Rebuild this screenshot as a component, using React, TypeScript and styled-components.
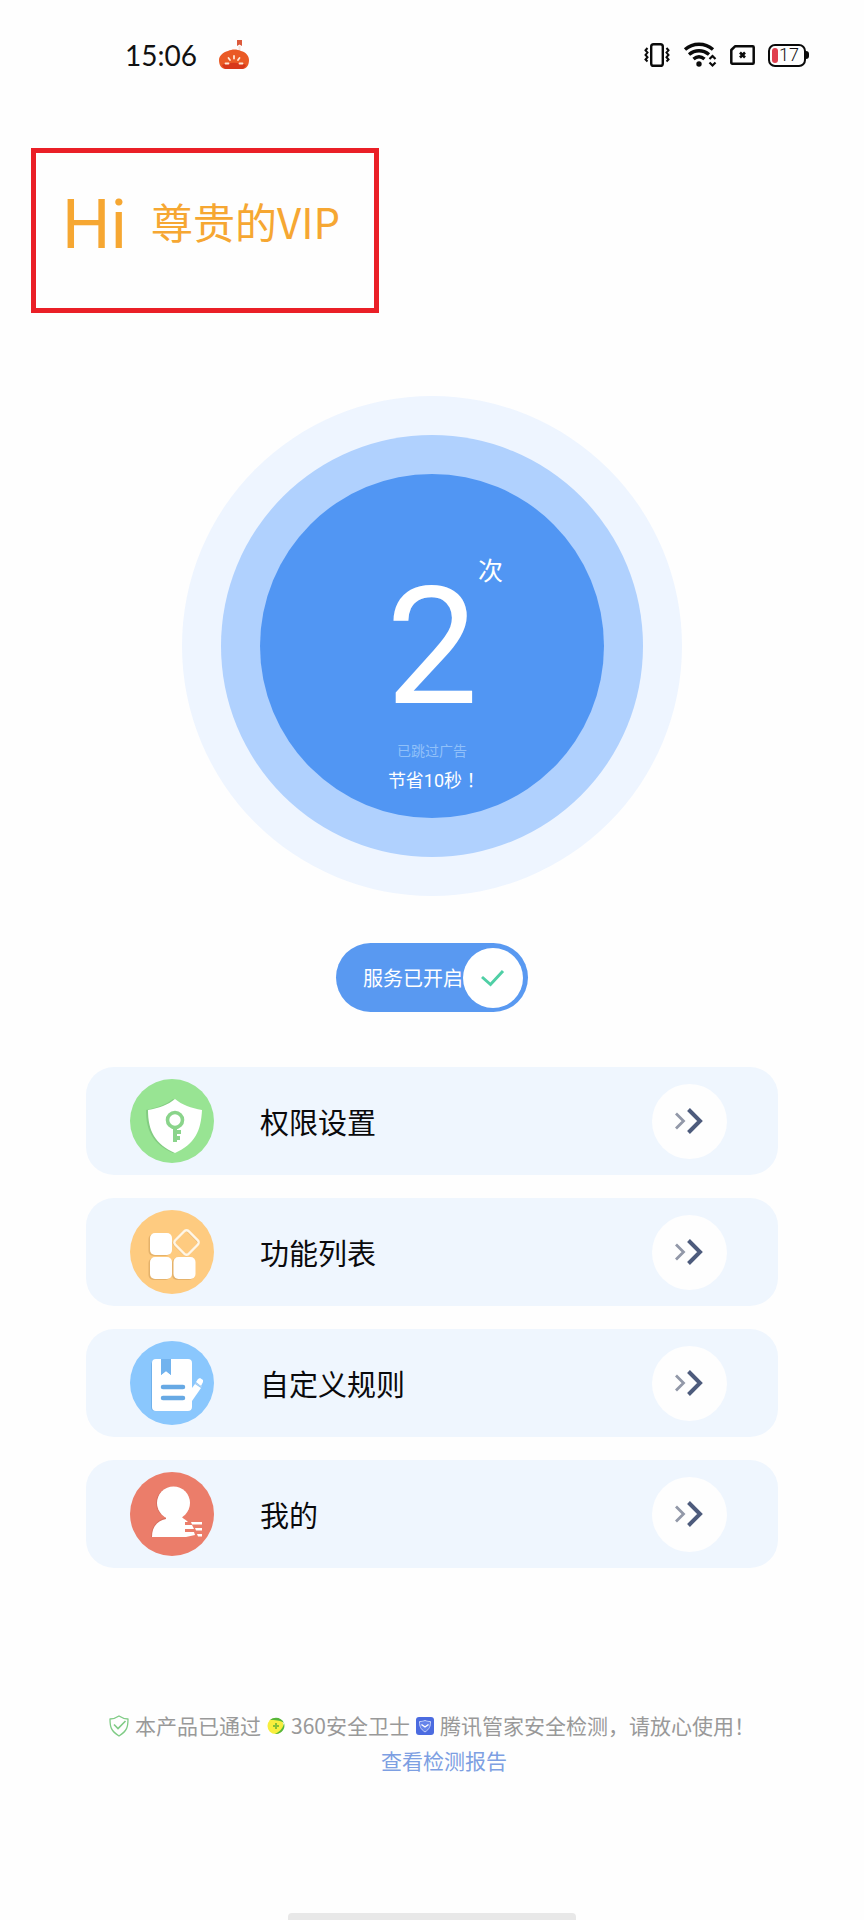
import React, { useState } from "react";
import styled, { createGlobalStyle } from "styled-components";

const GlobalStyle = createGlobalStyle`
  *, *::before, *::after { box-sizing: border-box; }
  body {
    margin: 0;
    background: #fefefe;
    color: #0a0a0c;
    font-family: "Noto Sans CJK SC", "Noto Sans", sans-serif;
  }
  button { font: inherit; color: inherit; }
`;

const Page = styled.div`
  min-height: 100vh;
  display: flex;
  flex-direction: column;
`;

/* ---------- status bar ---------- */

const StatusBar = styled.header`
  height: 110px;
  padding: 0 55px 0 125px;
  display: flex;
  align-items: center;
  justify-content: space-between;
`;

const StatusGroup = styled.div<{ $gap: number }>`
  display: flex;
  align-items: center;
  gap: ${(p) => p.$gap}px;
`;

const Clock = styled.time`
  font: 400 28px/32px Lato, sans-serif;
  color: #111;
`;

const Battery = styled.div`
  display: flex;
  align-items: center;

  &::after {
    content: "";
    width: 3px;
    height: 8px;
    border-radius: 0 3px 3px 0;
    background: #0a0a0a;
  }
`;

const BatteryBody = styled.div`
  width: 38px;
  height: 23px;
  padding: 0 2px;
  border: 2px solid #0a0a0a;
  border-radius: 7px;
  display: flex;
  align-items: center;
  gap: 1px;
  font: 300 18px/18px Roboto, sans-serif;
  color: #111;
`;

const BatteryLevel = styled.span`
  width: 6px;
  height: 15px;
  border-radius: 3px;
  background: #e0404f;
`;

/* ---------- greeting ---------- */

const Greeting = styled.section`
  align-self: flex-start;
  margin: 38px 0 0 31px;
  width: 348px;
  height: 165px;
  padding: 32px 0 0 26px;
  border: 5px solid #ea1f27;
  color: #f6a732;
  display: flex;
  align-items: flex-start;
  gap: 24px;
  white-space: nowrap;
`;

const Hi = styled.span`
  font: 400 68px/80px Roboto, sans-serif;
`;

const VipName = styled.span`
  font-size: 42px;
  line-height: 72px;
`;

/* ---------- counter ---------- */

const Ring = styled.div<{ $size: number; $color: string }>`
  width: ${(p) => p.$size}px;
  height: ${(p) => p.$size}px;
  border-radius: 50%;
  background: ${(p) => p.$color};
  display: flex;
  align-items: center;
  justify-content: center;
  flex: none;
`;

const CounterSection = styled.section`
  margin-top: 83px;
  display: flex;
  justify-content: center;
`;

const Counter = styled.div`
  height: 100%;
  padding-top: 80px;
  display: flex;
  flex-direction: column;
  align-items: center;
  color: #fff;
  font-family: Roboto, "Noto Sans CJK SC", sans-serif;
`;

const CountLine = styled.div`
  position: relative;
  font-size: 164px;
  line-height: 186px;
`;

const Unit = styled.span`
  position: absolute;
  left: 100%;
  top: 0;
  font-size: 25px;
  line-height: 36px;
`;

const CounterNote = styled.p`
  margin: 0;
  font-size: 14px;
  line-height: 22px;
  color: #90c0f9;
`;

const CounterSaved = styled.p`
  margin: 0;
  padding-left: 4px;
  font-size: 18px;
  line-height: 34px;
`;

const CenteredMark = styled.span`
  font-family: "Noto Sans CJK TC", sans-serif;
`;

/* ---------- service switch ---------- */

const Switch = styled.label`
  align-self: center;
  margin-top: 47px;
  width: 192px;
  height: 69px;
  padding: 0 5px 0 27px;
  border-radius: 35px;
  background: #5999f1;
  color: #fff;
  font-size: 20px;
  line-height: 30px;
  white-space: nowrap;
  display: flex;
  align-items: center;
  cursor: pointer;
`;

const SwitchInput = styled.input`
  position: absolute;
  opacity: 0;
  width: 1px;
  height: 1px;
  margin: 0;
`;

const Knob = styled.span`
  width: 60px;
  height: 60px;
  flex: none;
  border-radius: 50%;
  background: #fff;
  display: flex;
  align-items: center;
  justify-content: center;
`;

/* ---------- menu ---------- */

const Menu = styled.nav`
  margin-top: 55px;
  padding: 0 86px;
  display: flex;
  flex-direction: column;
  gap: 23px;
`;

const MenuRow = styled.button`
  height: 108px;
  padding: 0 51px 0 44px;
  border: 0;
  border-radius: 28px;
  background: #eff6fe;
  display: flex;
  align-items: center;
  text-align: left;
  cursor: pointer;
`;

const MenuLabel = styled.span`
  flex: 1;
  padding: 0 0 0 46px;
  font-size: 29px;
  line-height: 44px;
`;

const ArrowDisc = styled.span`
  width: 75px;
  height: 75px;
  border-radius: 50%;
  background: #fefefe;
  display: flex;
  align-items: center;
  justify-content: center;
`;

/* ---------- footer ---------- */

const Footer = styled.footer`
  margin-top: 140px;
  display: flex;
  flex-direction: column;
  align-items: center;
  font-size: 21px;
  line-height: 35px;
  color: #999;
`;

const Certified = styled.p`
  margin: 0;
  display: flex;
  align-items: center;
  gap: 6px;
  white-space: nowrap;
`;

const ReportLink = styled.a`
  margin-left: 24px;
  color: #7d9fe2;
  text-decoration: none;
`;

const HomeBar = styled.div`
  width: 288px;
  height: 7px;
  margin: auto auto 0;
  border-radius: 4px 4px 0 0;
  background: #e8e8e8;
`;

/* ---------- drawings ---------- */

const Pumpkin = () => (
  <svg width="30" height="30" viewBox="0 0 30 30" aria-hidden="true">
    <path d="M18 0h5v6l-2.500-1.500L18 6z" fill="#dc5a3c" />
    <path d="M19.500 6h2v4.500h-2z" fill="#fbe3da" />
    <path d="M9 11c4-2 9-2 13 0 5 1 8 5 8 9 0 6-3 9-7 9H7c-4 0-7-3-7-9 0-4 4-8 9-9z" fill="#ea5a25" />
    <path d="M3 25c6-3 18-3 24 0-1 2-2 4-4 4H7c-2 0-3-2-4-4z" fill="#d8381a" />
    <path d="M15 16v2.500M9.500 18l1.500 2M20.500 18L19 20M6.500 23.500h3M20.500 23.500h3" stroke="#ffe9d6" strokeWidth="1.800" strokeLinecap="round" />
  </svg>
);

const Vibrate = () => (
  <svg width="26" height="24" viewBox="0 0 26 24" fill="none" stroke="#0a0a0a" aria-hidden="true">
    <rect x="7.200" y="1.200" width="11.600" height="21.600" rx="2.400" strokeWidth="2.400" />
    <path d="M3.500 5l-2 2.300 2 2.300-2 2.300 2 2.300-2 2.300 2 2M22.500 5l2 2.300-2 2.300 2 2.300-2 2.300 2 2.300-2 2" strokeWidth="2" />
  </svg>
);

const Wifi = () => (
  <svg width="34" height="26" viewBox="-1 0 34 26" fill="none" stroke="#0a0a0a" aria-hidden="true">
    <path d="M1 7.500C9 .5 21 .5 29 7.500M5 12.500c6-5 14-5 20 0M9.500 17c3.500-3 7.500-3 11 0" strokeWidth="3.400" />
    <circle cx="15" cy="22" r="2.700" fill="#0a0a0a" stroke="none" />
    <path d="M25.500 17l3-3 3 3M25.500 20.500l3 3 3-3" strokeWidth="2.200" />
  </svg>
);

const NoSim = () => (
  <svg width="25" height="20" viewBox="0 0 25 20" fill="none" stroke="#0a0a0a" aria-hidden="true">
    <path d="M5 1.300h17.700a1 1 0 0 1 1 1v15.400a1 1 0 0 1-1 1H2.300a1 1 0 0 1-1-1V5z" strokeWidth="2.500" strokeLinejoin="round" />
    <path d="M10 7.500l5 5M15 7.500l-5 5" strokeWidth="2.600" />
  </svg>
);

const Check = () => (
  <svg width="24" height="18" viewBox="0 0 24 18" fill="none" aria-hidden="true">
    <path d="M1 8l8.500 7.500L22 2" stroke="#4fcfa5" strokeWidth="3" />
  </svg>
);

const DoubleChevron = () => (
  <svg width="30" height="26" viewBox="0 0 30 26" fill="none" aria-hidden="true">
    <path d="M1 5.500l7.500 7.500L1 20.500" stroke="#9298a8" strokeWidth="2.800" />
    <path d="M13.500 1.500L25 13 13.500 24.500" stroke="#4d5b7c" strokeWidth="4" />
  </svg>
);

const ShieldKeyIcon = () => (
  <svg width="84" height="84" viewBox="0 0 84 84" fill="none" aria-hidden="true">
    <circle cx="42" cy="42" r="42" fill="#98e493" />
    <path d="M43 20c7 6 16 9 26 11 0 21-6 34-26 43-20-9-27-22-27-43 10-2 20-5 27-11z" fill="#74bd76" opacity=".6" />
    <path d="M45 20c7 6 16 9 27 11-1 21-7 34-27 43-20-9-27-22-27-43 11-2 20-5 27-11z" fill="#fff" />
    <circle cx="45" cy="41" r="7.500" stroke="#8ad48b" strokeWidth="3.600" />
    <path d="M45 49v14M45 53h6M45 59h5" stroke="#8ad48b" strokeWidth="4" />
  </svg>
);

const GridIcon = () => (
  <svg width="84" height="84" viewBox="0 0 84 84" fill="none" aria-hidden="true">
    <circle cx="42" cy="42" r="42" fill="#fecb80" />
    <g fill="#d5a35d" opacity=".6">
      <rect x="18.500" y="24" width="22" height="22" rx="5" />
      <rect x="18.500" y="48" width="22" height="22" rx="5" />
      <rect x="42" y="48" width="22" height="22" rx="5" />
    </g>
    <g fill="#fff">
      <rect x="20" y="23" width="22" height="22" rx="5" />
      <rect x="20" y="47" width="22" height="22" rx="5" />
      <rect x="43.500" y="47" width="22" height="22" rx="5" />
    </g>
    <rect x="46.500" y="22.500" width="19" height="19" rx="3" transform="rotate(45 55 32.500)" stroke="#dba863" strokeWidth="2" />
    <rect x="47" y="23" width="19" height="19" rx="3" transform="rotate(45 56.500 32.500)" stroke="#fff6e6" strokeWidth="2.400" />
  </svg>
);

const NotebookIcon = () => (
  <svg width="84" height="84" viewBox="0 0 84 84" fill="none" aria-hidden="true">
    <circle cx="42" cy="42" r="42" fill="#8ac7fd" />
    <path d="M25 20h33a4 4 0 0 1 4 4v42a4 4 0 0 1-4 4H25a4 4 0 0 1-4-4V24a4 4 0 0 1 4-4z" fill="#5b9fdd" opacity=".55" />
    <path d="M26 18h5v16l5-4 5 4V18h17a4 4 0 0 1 4 4v44a4 4 0 0 1-4 4H26a4 4 0 0 1-4-4V22a4 4 0 0 1 4-4z" fill="#fff" />
    <path d="M62 47l3-4 6 4-9 13-4 2z" fill="#fff" />
    <path d="M66 41l2-3 2-1 3 2 0 2-2 4z" fill="#fff" />
    <path d="M65 42l7 4" stroke="#b9d3ee" strokeWidth="1" />
    <path d="M31 18h10v16l-5-4-5 4z" fill="#72b3ee" />
    <path d="M33 46h20M33 57h20" stroke="#67a9e4" strokeWidth="4.500" strokeLinecap="round" />
  </svg>
);

const PersonIcon = () => (
  <svg width="84" height="84" viewBox="0 0 84 84" fill="none" aria-hidden="true">
    <circle cx="42" cy="42" r="42" fill="#eb7d6a" />
    <g fill="#bd5c50" opacity=".4">
      <circle cx="42" cy="31" r="16" />
      <path d="M34 46c-8 3-13 9-13 19h30V46z" />
    </g>
    <g fill="#fff">
      <circle cx="43.500" cy="31" r="16.500" />
      <path d="M36 44h15c1 2 4 3 7 6h-3v3h7l2 4h-9v3h9l1 3-9 2H22c0-10 5-16 14-18z" />
      <path d="M61 50h11v2.500H62zM65 56h7v2.500h-6zM67 62h5v2.500h-4z" />
    </g>
  </svg>
);

const SafeShield = () => (
  <svg width="20" height="22" viewBox="0 0 20 22" fill="none" stroke="#7fcb85" aria-hidden="true">
    <path d="M10 1c3 2 5 3 9 3 0 8-1 12-9 17C2 16 1 12 1 4c4 0 6-1 9-3z" strokeWidth="1.300" strokeLinejoin="round" />
    <path d="M5 9.500l4 4 7.500-7.500" strokeWidth="1.600" />
  </svg>
);

const Guard360 = () => (
  <svg width="18" height="18" viewBox="0 0 18 18" fill="none" aria-hidden="true">
    <circle cx="8.500" cy="9" r="8" fill="#f7ee3d" />
    <path d="M3 3c5-4 12-2 14 3-4-3-9-3-14-3zM17 6c2 6-3 11-9 11 4-2 8-5 9-11z" fill="#55b63b" />
    <path d="M9 6v6M6 9h6" stroke="#86c034" strokeWidth="2" />
  </svg>
);

const TencentGuard = () => (
  <svg width="18" height="18" viewBox="0 0 18 18" fill="none" aria-hidden="true">
    <rect width="18" height="18" rx="3" fill="#4b6be0" />
    <path d="M9 3.500c2 .7 3 1 5.500 1 0 5-1 7.500-5.500 10.500-4.500-3-5.500-5.500-5.500-10.500 2.500 0 3.500-.3 5.500-1z" fill="#6684ea" stroke="#c5d2fa" />
    <path d="M5.500 7.500L9 10l3.500-2.500" stroke="#fff" strokeWidth="1.400" />
  </svg>
);

const menuItems = [
  { label: "权限设置", Icon: ShieldKeyIcon },
  { label: "功能列表", Icon: GridIcon },
  { label: "自定义规则", Icon: NotebookIcon },
  { label: "我的", Icon: PersonIcon },
];

export default function App() {
  const [enabled, setEnabled] = useState(true);

  return (
    <Page lang="zh-CN">
      <GlobalStyle />
      <StatusBar>
        <StatusGroup $gap={22}>
          <Clock>15:06</Clock>
          <Pumpkin />
        </StatusGroup>
        <StatusGroup $gap={13}>
          <Vibrate />
          <Wifi />
          <NoSim />
          <Battery>
            <BatteryBody>
              <BatteryLevel />
              17
            </BatteryBody>
          </Battery>
        </StatusGroup>
      </StatusBar>

      <Greeting>
        <Hi>Hi</Hi>
        <VipName>尊贵的VIP</VipName>
      </Greeting>

      <CounterSection>
        <Ring $size={500} $color="#eef5ff">
          <Ring $size={422} $color="#b0d1fe">
            <Ring $size={344} $color="#5196f3">
              <Counter>
                <CountLine>
                  2<Unit>次</Unit>
                </CountLine>
                <CounterNote>已跳过广告</CounterNote>
                <CounterSaved>
                  节省10秒<CenteredMark lang="zh-TW">！</CenteredMark>
                </CounterSaved>
              </Counter>
            </Ring>
          </Ring>
        </Ring>
      </CounterSection>

      <Switch>
        <SwitchInput type="checkbox" checked={enabled} onChange={(e) => setEnabled(e.target.checked)} />
        服务已开启
        <Knob>{enabled && <Check />}</Knob>
      </Switch>

      <Menu>
        {menuItems.map(({ label, Icon }) => (
          <MenuRow key={label} type="button">
            <Icon />
            <MenuLabel>{label}</MenuLabel>
            <ArrowDisc>
              <DoubleChevron />
            </ArrowDisc>
          </MenuRow>
        ))}
      </Menu>

      <Footer>
        <Certified>
          <SafeShield />
          <span>本产品已通过</span>
          <Guard360 />
          <span>360安全卫士</span>
          <TencentGuard />
          <span>腾讯管家安全检测，请放心使用！</span>
        </Certified>
        <ReportLink href="#report">查看检测报告</ReportLink>
      </Footer>

      <HomeBar />
    </Page>
  );
}
